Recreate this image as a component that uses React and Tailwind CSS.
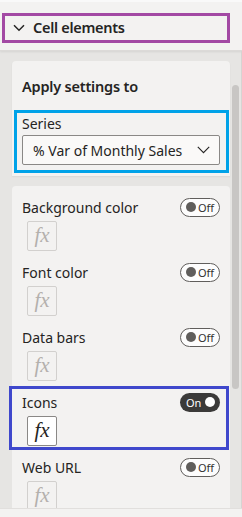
import React from "react";

const rows = [
  { label: "Background color", on: false },
  { label: "Font color", on: false },
  { label: "Data bars", on: false },
  { label: "Icons", on: true },
  { label: "Web URL", on: false },
];

function Toggle({ on }) {
  if (on) {
    return (
      <div className="w-[40px] h-[19px] rounded-full bg-[#3b3a39] flex items-center justify-between pl-[6px] pr-[5px]">
        <span className="text-[11px] leading-none text-white">On</span>
        <span className="w-[10px] h-[10px] rounded-full bg-white" />
      </div>
    );
  }
  return (
    <div className="w-[40px] h-[19px] rounded-full border border-[#605e5c] bg-[#fdfdfd] flex items-center pl-[5px] gap-[2px]">
      <span className="w-[10px] h-[10px] rounded-full bg-[#605e5c]" />
      <span className="text-[11px] leading-none text-[#323130]">Off</span>
    </div>
  );
}

function FxBox({ on }) {
  return (
    <div
      className={`ml-[5px] mt-[4px] w-[30px] h-[30px] rounded-[2px] border flex items-center justify-center ${
        on ? "border-[#8a8886] bg-white text-[#252423]" : "border-[#d2d0ce] bg-[#f3f2f1] text-[#b3b0ad]"
      }`}
    >
      <span className="italic text-[21px] leading-none pb-[2px]" style={{ fontFamily: "'Liberation Serif', serif" }}>
        fx
      </span>
    </div>
  );
}

function Row({ label, on }) {
  return (
    <div>
      <div className="h-[20px] flex items-center justify-between">
        <span className="text-[14px] text-[#252423]">{label}</span>
        <Toggle on={on} />
      </div>
      <FxBox on={on} />
    </div>
  );
}

export default function App() {
  return (
    <div
      className="w-[242px] h-[517px] overflow-hidden flex flex-col bg-[#e6e5e3] text-[#252423]"
      style={{ fontFamily: "'Noto Sans', 'Open Sans', sans-serif" }}
    >
      {/* header */}
      <div className="h-[51px] shrink-0 bg-[#f3f2f1] border-t-2 border-t-[#f9f9f9] border-b border-b-[#dcdad8] pt-[11px] pl-[2px] pr-[12px] shadow-[0_1px_2px_rgba(0,0,0,0.08)]">
        <div className="h-[30px] border-[3px] border-[#a349a4] flex items-center pl-[8px] gap-[8px]">
          <svg width="12" height="8" viewBox="0 0 12 8" fill="none">
            <path d="M1 1.2 L6 6.2 L11 1.2" stroke="#252423" strokeWidth="1.5" />
          </svg>
          <span className="text-[14.5px] font-semibold tracking-[-0.3px]">Cell elements</span>
        </div>
      </div>

      {/* body */}
      <div className="flex-1 flex min-h-0">
        <div className="w-[231px] pl-[12px] pt-[10px] flex flex-col gap-[10px]">
          {/* card 1 */}
          <div className="bg-[#f3f2f1] rounded-t-[4px] pt-[16px] pb-[3px] shadow-[0_1px_2px_rgba(0,0,0,0.06)]">
            <div className="pl-[10px] h-[20px] flex items-center text-[14.5px] font-semibold tracking-[-0.2px]">
              Apply settings to
            </div>
            <div className="mt-[13px] ml-[2px] mr-[1px] border-[3px] border-[#00a2e8] pl-[5px] pr-[6px] pb-[5px]">
              <div className="h-[20px] flex items-center text-[14px]">Series</div>
              <div className="mt-[2px] h-[30px] rounded-[2px] border border-[#8a8886] bg-[#faf9f8] flex items-center justify-between pl-[10px] pr-[9px]">
                <span className="text-[14px]">% Var of Monthly Sales</span>
                <svg width="13" height="8" viewBox="0 0 13 8" fill="none">
                  <path d="M0.8 0.8 L6.5 6.6 L12.2 0.8" stroke="#252423" strokeWidth="1.1" />
                </svg>
              </div>
            </div>
          </div>

          {/* card 2 */}
          <div className="flex-1 bg-[#f3f2f1] rounded-t-[4px] pt-[11px]">
            <div className="pl-[10px] pr-[10px]">
              <Row {...rows[0]} />
            </div>
            <div className="mt-[11px] pl-[10px] pr-[10px]">
              <Row {...rows[1]} />
            </div>
            <div className="mt-[11px] pl-[10px] pr-[10px]">
              <Row {...rows[2]} />
            </div>
            <div className="mt-[5px] ml-[-3px] mr-[1px] border-[3px] border-[#3f48cc] pl-[10px] pr-[6px] pt-[3px] pb-[1px]">
              <Row {...rows[3]} />
            </div>
            <div className="mt-[7px] pl-[10px] pr-[10px]">
              <Row {...rows[4]} />
            </div>
          </div>
        </div>

        {/* scrollbar */}
        <div className="flex-1 pl-[2px] pr-[2px] pt-[34px] border-r border-[#d6d4d2]">
          <div className="w-[7px] h-[304px] rounded-full bg-[#c8c6c4]" />
        </div>
      </div>

      {/* footer strip */}
      <div className="h-[9px] shrink-0 bg-[#f3f2f1] border-t border-[#e1dfdd]" />
    </div>
  );
}
